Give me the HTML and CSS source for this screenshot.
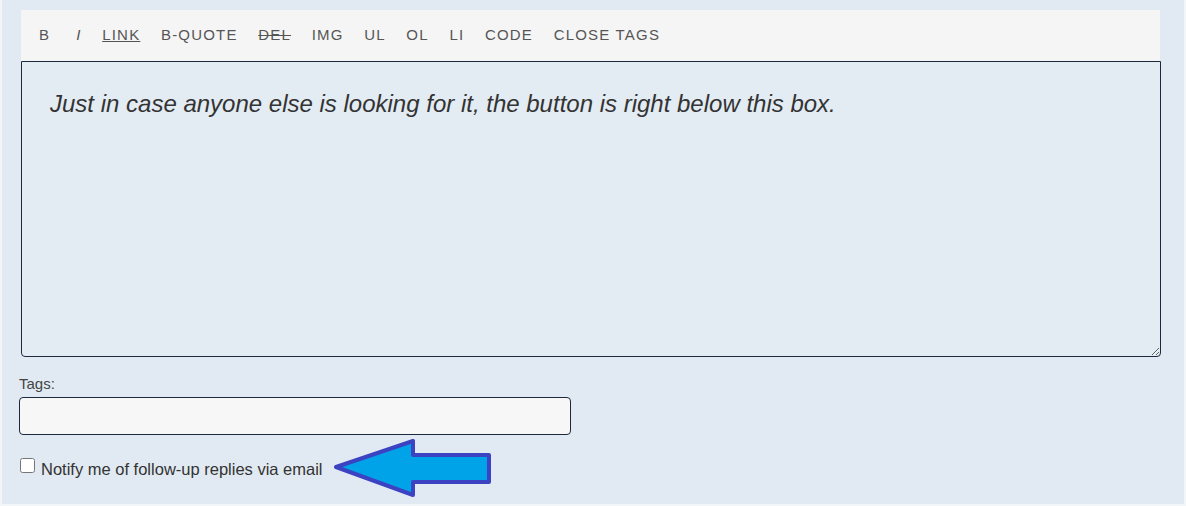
FILE: index.html
```html
<!DOCTYPE html>
<html lang="en">
<head>
    <meta charset="UTF-8">
    <title>Comment form</title>
    <link rel="stylesheet" href="styles.css">
</head>
<body>
    <div class="comment-box">
        <div class="toolbar">
            <span class="tool first">B</span>
            <span class="tool italic">I</span>
            <span class="tool underline">LINK</span>
            <span class="tool">B-QUOTE</span>
            <span class="tool strike">DEL</span>
            <span class="tool">IMG</span>
            <span class="tool">UL</span>
            <span class="tool">OL</span>
            <span class="tool">LI</span>
            <span class="tool">CODE</span>
            <span class="tool">CLOSE TAGS</span>
        </div>
        <textarea class="editor">Just in case anyone else is looking for it, the button is right below this box.</textarea>

        <label class="tags-label" for="tags">Tags:</label>
        <input type="text" id="tags" class="tags-input">

        <div class="notify">
            <label class="notify-label">
                <input type="checkbox" class="notify-check"> Notify me of follow-up replies via email
            </label>
            <svg class="arrow" width="160" height="60" viewBox="0 0 160 60">
                <polygon points="3,28 80,2 80,16 156,16 156,43 80,43 80,56" fill="#00a3e8" stroke="#3b43c2" stroke-width="4" stroke-linejoin="round"/>
            </svg>
        </div>
    </div>
</body>
</html>
```

FILE: styles.css
```css
html, body {
    margin: 0;
    padding: 0;
    background: #f3f6f9;
}
body {
    font-family: "Liberation Sans", Arial, sans-serif;
    color: #333;
}
.comment-box {
    margin: 0 2px;
    height: 504px;
    box-sizing: border-box;
    background: #e1eaf2;
    padding: 10px 24px 0 17px;
}
.toolbar {
    margin-left: 2px;
    height: 51px;
    background: #f5f5f5;
    display: flex;
    align-items: center;
    padding: 0 0 3px 18px;
    box-sizing: border-box;
}
.tool {
    font-size: 15px;
    letter-spacing: 1.2px;
    color: #555;
    margin-right: 20.6px;
}
.first {
    margin-right: 26px;
}
.italic {
    font-style: italic;
}
.underline {
    text-decoration: underline;
}
.strike {
    text-decoration: line-through;
}
.editor {
    display: block;
    margin-left: 2px;
    width: 1140px;
    height: 296px;
    box-sizing: border-box;
    background: #e3ebf3;
    border: 1px solid #1d2a3d;
    border-radius: 0 0 4px 4px;
    padding: 28px 27px 26px 28px;
    font-family: "Liberation Sans", Arial, sans-serif;
    font-style: italic;
    font-size: 24px;
    color: #333;
    outline: none;
}
.tags-label {
    display: block;
    margin-top: 18px;
    font-size: 15px;
    color: #444;
}
.tags-input {
    display: block;
    margin-top: 5px;
    width: 552px;
    height: 38px;
    box-sizing: border-box;
    background: #f7f7f7;
    border: 1px solid #1d2a3d;
    border-radius: 4px;
}
.notify {
    display: flex;
    align-items: center;
    margin-top: 4px;
}
.notify-label {
    font-size: 16.5px;
    color: #333;
    display: flex;
    align-items: center;
}
.notify-check {
    margin: 0 6px 7px 1px;
    width: 15px;
    height: 15px;
}
.arrow {
    margin-left: 10px;
}
```
